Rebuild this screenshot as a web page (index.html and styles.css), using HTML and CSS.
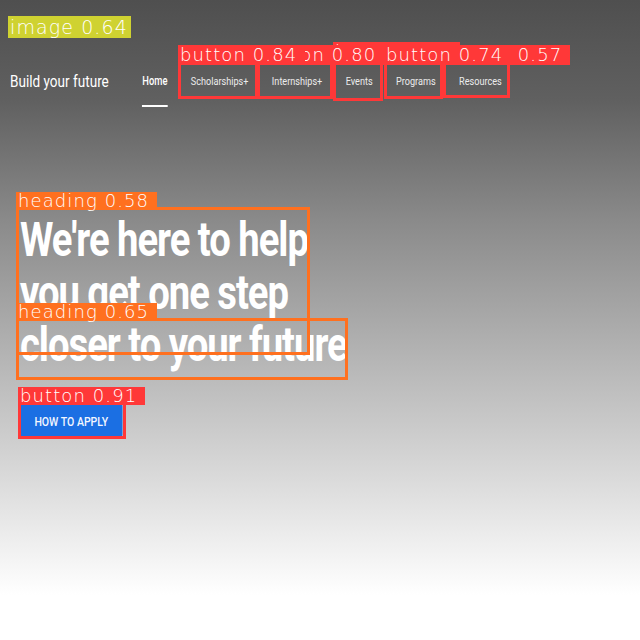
FILE: index.html
```html
<!DOCTYPE html>
<html lang="en">
<head>
<meta charset="utf-8">
<title>Build your future</title>
<link rel="stylesheet" href="styles.css">
</head>
<body>
<div class="page">
  <header class="header">
    <div class="brand">Build your future</div>
    <nav class="nav">
      <a class="nav-item active">Home</a>
      <a class="nav-item">Scholarships+</a>
      <a class="nav-item">Internships+</a>
      <a class="nav-item">Events</a>
      <a class="nav-item">Programs</a>
      <a class="nav-item">Resources</a>
    </nav>
  </header>
  <section class="hero">
    <h1 class="hero-title">We're here to help<br>you get one step<br>closer to your future</h1>
    <a class="cta">HOW TO APPLY</a>
  </section>
</div>

<div class="overlay">
  <div class="det det-image" style="left:8px;top:38px;width:123px;height:0px"><span class="det-label label-lg">image 0.64</span></div>
  <div class="det det-btn" style="left:333px;top:59px;width:50px;height:42px"><span class="det-label">button 0.80</span></div>
  <div class="det det-btn" style="left:443px;top:62px;width:67px;height:36px"><span class="det-label">button 0.57</span></div>
  <div class="det det-btn" style="left:257px;top:62px;width:76px;height:37px"><span class="det-label">button 0.80</span></div>
  <div class="det det-btn" style="left:384px;top:62px;width:59px;height:37px"><span class="det-label">button 0.74</span></div>
  <div class="det det-btn" style="left:178px;top:62px;width:80px;height:37px"><span class="det-label">button 0.84</span></div>
  <div class="det det-head" style="left:16px;top:207px;width:294px;height:148px"><span class="det-label label-sm">heading 0.58</span></div>
  <div class="det det-head" style="left:16px;top:318px;width:332px;height:62px"><span class="det-label label-sm">heading 0.65</span></div>
  <div class="det det-btn" style="left:18px;top:402px;width:108px;height:37px"><span class="det-label label-sm">button 0.91</span></div>
</div>
</body>
</html>
```

FILE: styles.css
```css
html, body {
  margin: 0;
  padding: 0;
  width: 640px;
  height: 640px;
  overflow: hidden;
}

body {
  position: relative;
  font-family: Roboto, "Liberation Sans", sans-serif;
  color: #fff;
  background: linear-gradient(to bottom,
    #4f4f4f 0px,
    #606060 100px,
    #8a8a8a 220px,
    #cecece 440px,
    #ffffff 595px,
    #ffffff 640px);
}

/* content is horizontally compressed like the source capture */
.page {
  width: 660px;
  transform: scaleX(0.78);
  transform-origin: 0 0;
}

.header {
  display: flex;
  align-items: center;
  height: 37px;
  margin-top: 62px;
  padding-left: 12.8px;
}

.brand {
  font-size: 17.4px;
  font-weight: 400;
  color: #fff;
  white-space: nowrap;
}

.nav {
  display: flex;
  height: 37px;
  margin-left: 28px;
}

.nav-item {
  position: relative;
  display: flex;
  align-items: center;
  padding: 0 15px;
  font-size: 11.7px;
  color: #ececec;
  white-space: nowrap;
}

.nav-item.active {
  font-size: 12px;
  font-weight: 500;
  color: #fff;
}

.nav-item.active::after {
  content: "";
  position: absolute;
  left: 15px;
  right: 15px;
  bottom: -8px;
  height: 2px;
  background: #fff;
}

.hero {
  padding-left: 25.6px;
}

.hero-title {
  margin: 115px 0 0;
  font-size: 49px;
  line-height: 52.5px;
  font-weight: 700;
  letter-spacing: -1.3px;
  color: #fff;
  white-space: nowrap;
}

.cta {
  display: inline-flex;
  align-items: center;
  height: 33px;
  margin-top: 32.5px;
  padding: 0 18.5px;
  background: #1b6fe3;
  border-radius: 2px;
  font-size: 13.5px;
  font-weight: 500;
  color: #f2f6ff;
}

/* detection overlay */
.overlay {
  position: absolute;
  left: 0;
  top: 0;
  width: 640px;
  height: 640px;
  pointer-events: none;
}

.det {
  position: absolute;
  box-sizing: border-box;
  border: 3px solid;
}

.det-btn { border-color: #ff3838; }
.det-head { border-color: #ff701f; }
.det-image { border: 0; }

.det-label {
  position: absolute;
  left: -3px;
  bottom: 100%;
  height: 20px;
  line-height: 20px;
  padding: 0 8px 0 2px;
  font-family: "DejaVu Sans ExtraLight", "DejaVu Sans", sans-serif;
  font-weight: 200;
  font-size: 18px;
  letter-spacing: 1.1px;
  color: #fff;
  white-space: nowrap;
}

.det-btn .det-label { background: #ff3838; }
.det-head .det-label { background: #ff701f; }
.det-image .det-label {
  background: #cfd231;
  left: 0;
  font-size: 19px;
  padding-right: 3px;
}

.label-lg {
  height: 22px;
  line-height: 22px;
}

.label-sm {
  height: 18px;
  line-height: 18px;
}
```
